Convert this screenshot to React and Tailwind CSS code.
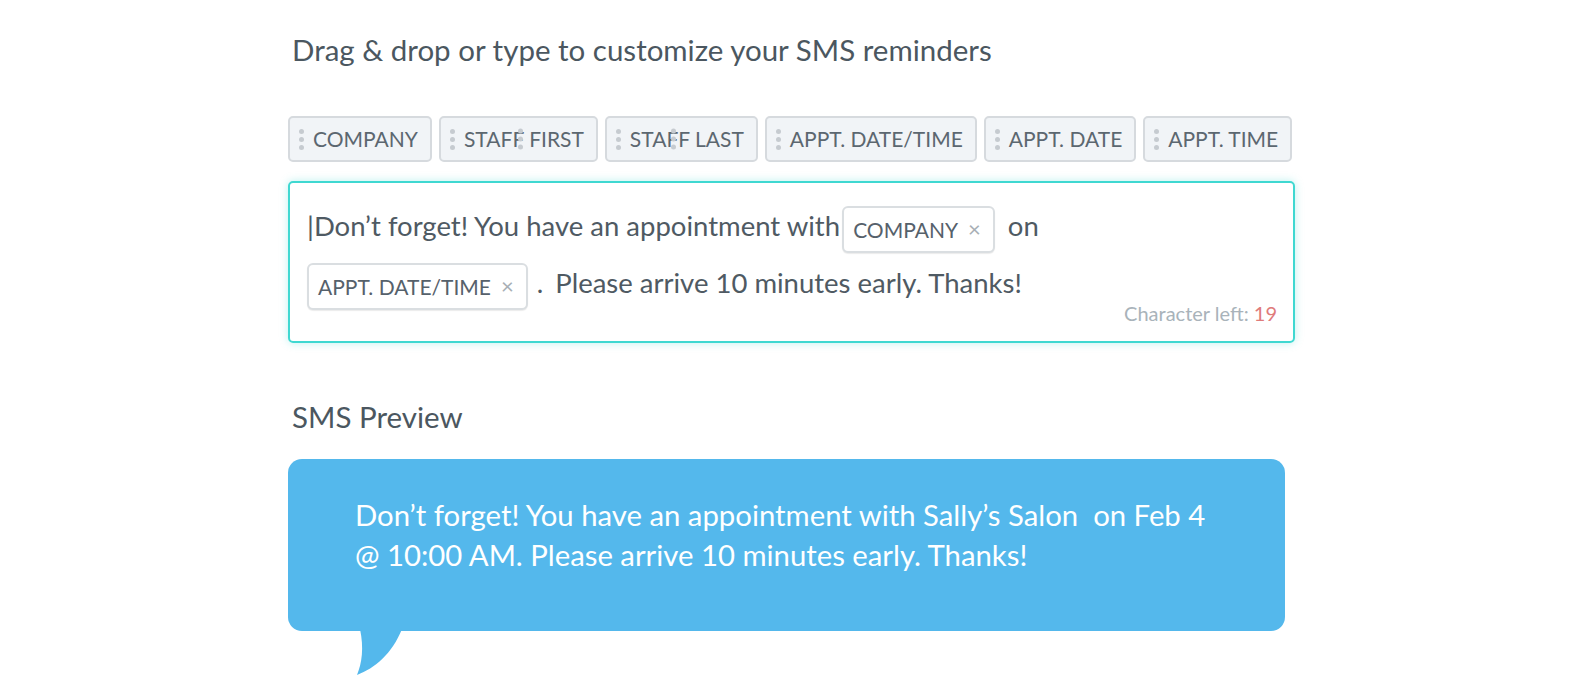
import React from "react";

const font = { fontFamily: "Lato, 'Open Sans', sans-serif" };

function Dots() {
  return (
    <span className="flex flex-col gap-[3px]">
      <span className="w-[5px] h-[5px] rounded-full bg-[#c6cbd0]" />
      <span className="w-[5px] h-[5px] rounded-full bg-[#c6cbd0]" />
      <span className="w-[5px] h-[5px] rounded-full bg-[#c6cbd0]" />
    </span>
  );
}

function Chip({ label, extra }) {
  return (
    <div className="relative shrink-0 whitespace-nowrap flex items-center h-[46px] pl-[9px] pr-[12px] gap-[9px] rounded-[5px] border-2 border-[#d6dade] bg-[#f1f4f7] text-[21px] text-[#5c6770]">
      <Dots />
      <span>{label}</span>
      {extra !== undefined && (
        <span className="absolute top-1/2 -translate-y-1/2" style={{ left: extra }}>
          <Dots />
        </span>
      )}
    </div>
  );
}

function Tag({ label }) {
  return (
    <span className="inline-flex items-center align-middle h-[47px] pl-[9px] pr-[12px] gap-[10px] rounded-[6px] border-2 border-[#dadee1] bg-white shadow-[0_1px_1px_rgba(0,0,0,0.08)] text-[21px] leading-none text-[#56616b] whitespace-nowrap">
      <span>{label}</span>
      <span className="text-[22px] text-[#a8afb5]">×</span>
    </span>
  );
}

export default function App() {
  return (
    <div className="h-[686px] w-full overflow-hidden bg-white" style={font}>
      <div className="ml-[288px] w-[1008px] pt-[33px]">
        <h1 className="pl-[4px] text-[29.5px] leading-[34px] text-[#4b5760] whitespace-nowrap">
          Drag &amp; drop or type to customize your SMS reminders
        </h1>

        <div className="mt-[49px] flex gap-[7px]">
          <Chip label="COMPANY" />
          <Chip label="STAFF FIRST" extra="77px" />
          <Chip label="STAFF LAST" extra="64px" />
          <Chip label="APPT. DATE/TIME" />
          <Chip label="APPT. DATE" />
          <Chip label="APPT. TIME" />
        </div>

        <div className="mt-[19px] w-[1007px] rounded-[5px] border-2 border-[#3fd8d1] shadow-[0_0_8px_rgba(63,216,209,0.35)] pl-[17px] pr-[16px] pt-[14px] pb-[17px]">
          <p className="text-[27.5px] leading-[57px] text-[#4f5a63]">
            |Don’t forget! You have an appointment with <span className="-ml-[5px]"><Tag label="COMPANY" /></span>
            <span className="ml-[13px]">on</span>
            <br />
            <Tag label="APPT. DATE/TIME" />
            <span className="ml-[9px]">.</span> <span className="ml-[5px]">Please arrive 10 minutes early. Thanks!</span>
          </p>
          <div className="-mt-[9px] text-right text-[20px] leading-[22px] text-[#a9b3ba]">
            Character left: <span className="text-[#df7b7b]">19</span>
          </div>
        </div>

        <h2 className="mt-[57px] pl-[4px] text-[29.5px] leading-[34px] text-[#4b5760]">SMS Preview</h2>

        <div className="relative mt-[25px] w-[997px] h-[172px] rounded-[14px] bg-[#54b8ec] pl-[67px] pt-[36px] text-[29.3px] leading-[40px] text-white whitespace-nowrap">
          Don’t forget! You have an appointment with Sally’s Salon&nbsp; on Feb 4
          <br />
          @ 10:00 AM. Please arrive 10 minutes early. Thanks!
          <svg
            className="absolute left-[64px] top-full -mt-[2px]"
            width="52"
            height="48"
            viewBox="0 0 52 48"
          >
            <path d="M8 0 C12 19 10 34 5 46 C23 39 40 25 50 0 Z" fill="#54b8ec" />
          </svg>
        </div>
      </div>
    </div>
  );
}
